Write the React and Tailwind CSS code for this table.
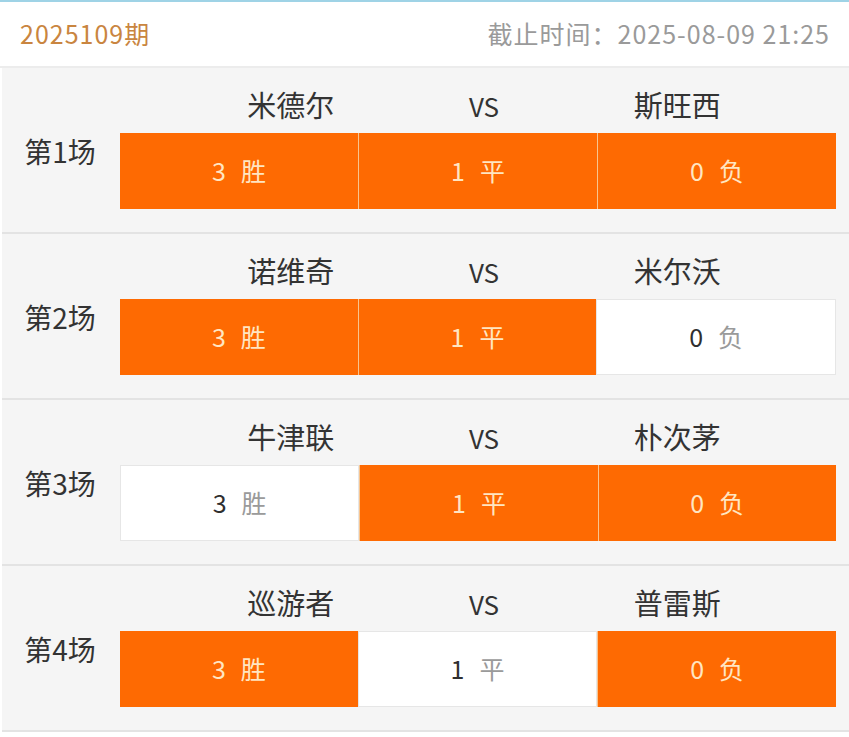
import React from "react";
import clsx from "clsx";

const MATCHES = [
  { no: 1, home: "米德尔", away: "斯旺西", picks: [true, true, true] },
  { no: 2, home: "诺维奇", away: "米尔沃", picks: [true, true, false] },
  { no: 3, home: "牛津联", away: "朴次茅", picks: [false, true, true] },
  { no: 4, home: "巡游者", away: "普雷斯", picks: [true, false, true] },
];

const OPTIONS = [
  { num: "3", label: "胜" },
  { num: "1", label: "平" },
  { num: "0", label: "负" },
];

const FONT = { fontFamily: '"Noto Sans CJK SC", "Noto Sans", sans-serif' };

function Cell({ num, label, active, first }) {
  return (
    <div
      className={clsx(
        "flex-1 h-[76px] flex items-center justify-center gap-[15px] text-[25px]",
        active ? "bg-[#fe6a02] text-[#ffe6c2]" : "bg-white border border-[#e6e6e6]",
        active && !first && "border-l border-l-[#f8c48e]"
      )}
    >
      <span className={active ? "" : "text-[#2f2f2f]"}>{num}</span>
      <span className={active ? "" : "text-[#9a9a9a]"}>{label}</span>
    </div>
  );
}

function MatchCard({ m }) {
  return (
    <div className="ml-[2px] bg-[#f5f5f5] border-b-2 border-[#e3e3e3] pt-[14px] pb-[23px] flex">
      <div className="w-[118px] flex items-center justify-center pt-[10px] pr-[2px] text-[28px] text-[#333]">
        第{m.no}场
      </div>
      <div className="flex-1 pr-[13px]">
        <div className="h-[46px] grid grid-cols-3 items-center text-[29px] text-[#333] pl-[74px] pr-[62px]">
          <span className="text-center">{m.home}</span>
          <span className="text-center text-[26px]">VS</span>
          <span className="text-center">{m.away}</span>
        </div>
        <div className="mt-[5px] flex">
          {OPTIONS.map((o, i) => (
            <Cell key={o.num} {...o} active={m.picks[i]} first={i === 0} />
          ))}
        </div>
      </div>
    </div>
  );
}

export default function App() {
  return (
    <div className="w-[849px] h-[737px] bg-white overflow-hidden" style={FONT}>
      <div className="h-[2px] bg-[#9fd3e6]" />
      <div className="h-[66px] flex items-center justify-between pl-[20px] pr-[19px] border-b-2 border-[#ececec]">
        <span className="text-[25px] text-[#c98540] tracking-[1px]">2025109期</span>
        <span className="text-[25px] text-[#9a9a9a] tracking-[1px]">截止时间：2025-08-09 21:25</span>
      </div>
      {MATCHES.map((m) => (
        <MatchCard key={m.no} m={m} />
      ))}
    </div>
  );
}
